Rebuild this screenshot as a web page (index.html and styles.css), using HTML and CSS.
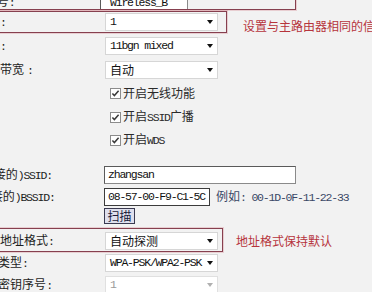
FILE: index.html
```html
<!DOCTYPE html>
<html lang="zh-CN">
<head>
<meta charset="utf-8">
<title>无线设置</title>
<link rel="stylesheet" href="styles.css">
</head>
<body>
<div class="page">
  <div class="row h16 mark mark-a">
    <div class="lbl"><span class="lt o26"><span class="m">SSID</span>号<span class="m">:</span></span></div>
    <div class="inp inp-top"><span class="m">Wireless_B</span></div>
  </div>
  <div class="row h24 mark mark-b">
    <div class="lbl"><span class="lt o24">信道<span class="m">:</span></span></div>
    <div class="sel"><span class="m">1</span></div>
    <span class="hint hint-b">设置与主路由器相同的信道</span>
  </div>
  <div class="row h24">
    <div class="lbl"><span class="lt o24">模式<span class="m">:</span></span></div>
    <div class="sel"><span class="m">11bgn mixed</span></div>
  </div>
  <div class="row h23">
    <div class="lbl"><span class="lt o24">频段带宽<span class="m colon-w">:</span></span></div>
    <div class="sel">自动</div>
  </div>
  <div class="row h24">
    <div class="lbl"></div>
    <span class="cbx"><svg width="11" height="11" viewBox="0 0 11 11"><rect x="0.5" y="0.5" width="10" height="10" fill="#fff" stroke="#8c8c8c"/><path d="M2.4 5.4 L4.4 7.6 L8.6 2.8" fill="none" stroke="#3a3a3a" stroke-width="1.5"/></svg></span>
    <span class="cbt">开启无线功能</span>
  </div>
  <div class="row h24">
    <div class="lbl"></div>
    <span class="cbx"><svg width="11" height="11" viewBox="0 0 11 11"><rect x="0.5" y="0.5" width="10" height="10" fill="#fff" stroke="#8c8c8c"/><path d="M2.4 5.4 L4.4 7.6 L8.6 2.8" fill="none" stroke="#3a3a3a" stroke-width="1.5"/></svg></span>
    <span class="cbt">开启<span class="m">SSID</span>广播</span>
  </div>
  <div class="row h22">
    <div class="lbl"></div>
    <span class="cbx"><svg width="11" height="11" viewBox="0 0 11 11"><rect x="0.5" y="0.5" width="10" height="10" fill="#fff" stroke="#8c8c8c"/><path d="M2.4 5.4 L4.4 7.6 L8.6 2.8" fill="none" stroke="#3a3a3a" stroke-width="1.5"/></svg></span>
    <span class="cbt">开启<span class="m">WDS</span></span>
  </div>
  <div class="row h22 gap-top">
    <div class="lbl"><span class="lt o24"><span class="m">(</span>桥接的<span class="m">)SSID:</span></span></div>
    <div class="inp inp-ssid"><span class="m">zhangsan</span></div>
  </div>
  <div class="row h22">
    <div class="lbl"><span class="lt o27"><span class="m">(</span>桥接的<span class="m">)BSSID:</span></span></div>
    <div class="inp inp-bssid"><span class="m">08-57-00-F9-C1-5C</span></div>
    <span class="eg">例如<span class="m">: 00-1D-0F-11-22-33</span></span>
  </div>
  <div class="row h16">
    <div class="lbl"></div>
    <div class="btn">扫描</div>
  </div>
  <div class="row h22 mark mark-c gap-top-s">
    <div class="lbl"><span class="lt o0">地址格式<span class="m">:</span></span></div>
    <div class="sel">自动探测</div>
    <span class="hint hint-c">地址格式保持默认</span>
  </div>
  <div class="row h22">
    <div class="lbl"><span class="lt o26">密钥类型<span class="m">:</span></span></div>
    <div class="sel"><span class="m">WPA-PSK/WPA2-PSK</span></div>
  </div>
  <div class="row h22">
    <div class="lbl"><span class="lt o19"><span class="m">WEP</span>密钥序号<span class="m">:</span></span></div>
    <div class="sel sel-off"><span class="m">1</span></div>
  </div>
</div>
</body>
</html>
```

FILE: styles.css
```css
html, body {
  margin: 0;
  padding: 0;
  height: 100%;
  overflow: hidden;
  background: #f2f2f2;
}

body {
  font-family: "Noto Sans CJK SC", sans-serif;
  font-size: 12px;
  line-height: 16px;
  color: #222;
}

.m {
  font-family: "Liberation Mono", "Noto Sans CJK SC", monospace;
  font-size: 11.5px;
  letter-spacing: -1.2px;
}

.page {
  margin-top: -6px;
}

.row {
  display: flex;
  align-items: center;
  position: relative;
  white-space: nowrap;
}

.h16 { height: 16px; }
.h22 { height: 22px; }
.h23 { height: 23px; }
.h24 { height: 24px; }

.gap-top { margin-top: 13px; }
.gap-top-s { margin-top: 6px; }

.lbl {
  width: 104px;
  flex: none;
  overflow: hidden;
  color: #1e1e1e;
}

.lt { display: inline-block; }
.o0 { margin-left: 0; }
.o19 { margin-left: -19px; }
.o24 { margin-left: -24px; }
.o26 { margin-left: -26px; }
.o27 { margin-left: -27px; }

.colon-w { margin-left: 3px; }

/* annotation outlines drawn over the rows */
.mark::after {
  content: "";
  position: absolute;
  left: -10px;
  border: 1px solid #86404f;
  box-shadow: 0 0 0 1px rgba(214, 140, 150, 0.35);
  pointer-events: none;
}
.mark-a::after { top: -20px; bottom: 0; width: 304px; }
.mark-b::after { top: 1px; bottom: 1px; width: 235px; }
.mark-c::after { top: -2px; bottom: 0; width: 231px; }

.sel {
  flex: none;
  position: relative;
  box-sizing: border-box;
  width: 113px;
  height: 18px;
  margin-left: 1px;
  padding-left: 4px;
  display: flex;
  align-items: center;
  background: #fff;
  border: 1px solid #d6d6d6;
  color: #111;
}
.sel::after {
  content: "";
  position: absolute;
  right: 4px;
  top: 6px;
  border-left: 3px solid transparent;
  border-right: 3px solid transparent;
  border-top: 4px solid #111;
}
.sel-off { color: #9a9a9a; border-color: #e0e0e0; }
.sel-off::after { border-top-color: #b0b0b0; }

.inp {
  flex: none;
  box-sizing: border-box;
  height: 18px;
  display: flex;
  align-items: center;
  padding-left: 3px;
  background: #fff;
  border: 1px solid #8a8a8a;
  border-top-color: #5a5a5a;
  border-left-color: #5a5a5a;
  color: #111;
}
.inp-top {
  margin-left: -4px;
  width: 88px;
  padding-left: 9px;
  align-self: flex-end;
  align-items: flex-end;
  line-height: 12px;
  padding-bottom: 0;
}
.inp-ssid { width: 192px; }
.inp-bssid { width: 106px; border-color: #3c3c3c; }

.hint {
  color: #b6343c;
  font-size: 12px;
}
.hint-b { margin-left: 25px; margin-top: 8px; }
.hint-c { margin-left: 18px; }

.cbx {
  display: flex;
  margin-left: 6px;
}
.cbt {
  margin-left: 2px;
  color: #2a2a2a;
}

.eg {
  margin-left: 6px;
  color: #3a4866;
}

.btn {
  box-sizing: border-box;
  width: 31px;
  height: 16px;
  display: flex;
  align-items: center;
  justify-content: center;
  background: #dfe0ee;
  border: 1px solid #3a3a50;
  color: #1a1a3a;
  font-size: 12px;
}
```
